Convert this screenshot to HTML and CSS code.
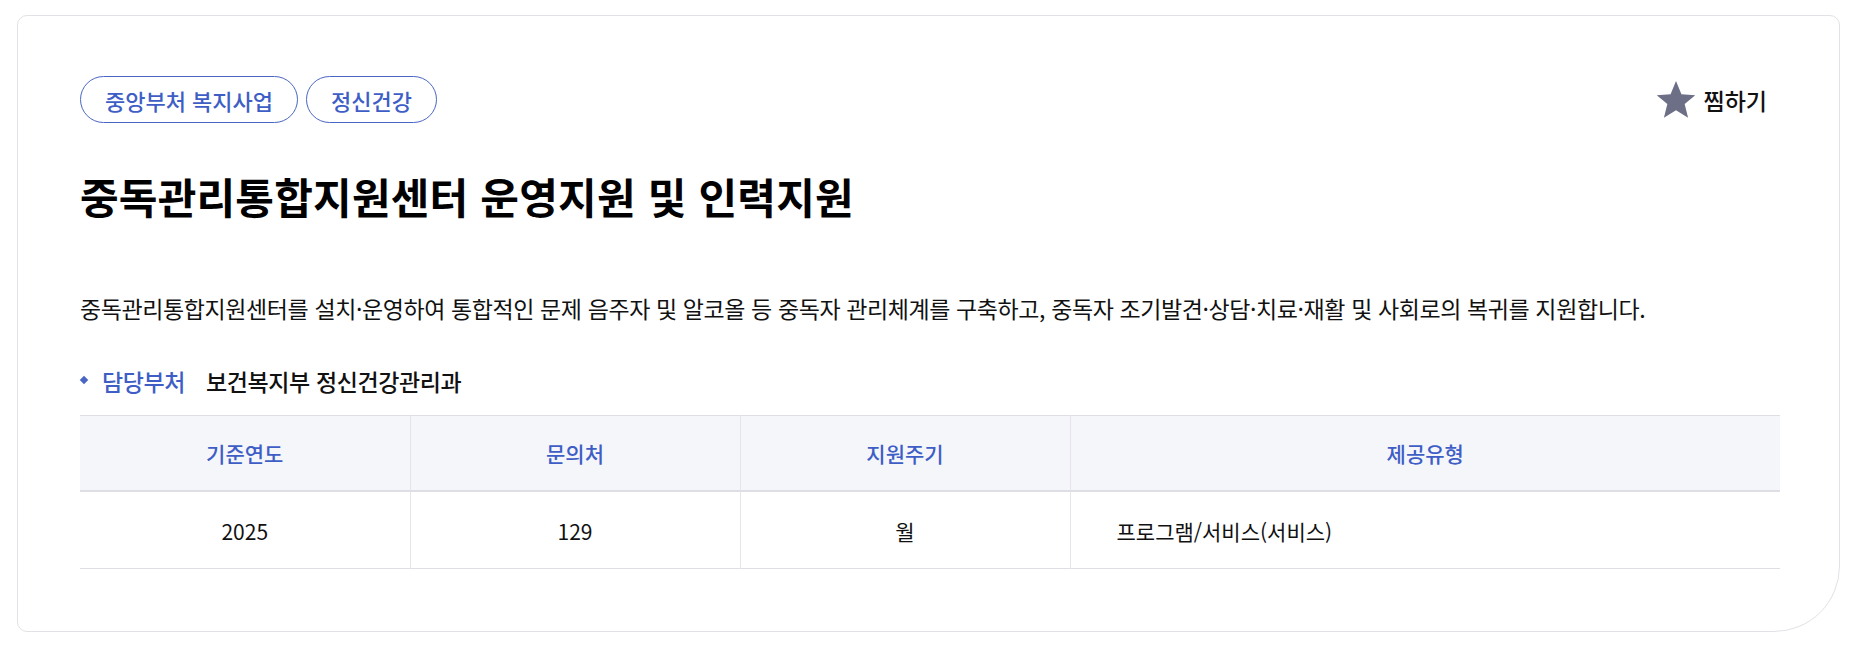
FILE: index.html
```html
<!DOCTYPE html>
<html lang="ko">
<head>
<meta charset="utf-8">
<title>중독관리통합지원센터 운영지원 및 인력지원</title>
<link rel="stylesheet" href="styles.css">
</head>
<body>
<div class="page">
  <section class="card">
    <div class="top-row">
      <div class="tags">
        <span class="tag">중앙부처 복지사업</span>
        <span class="tag">정신건강</span>
      </div>
      <button class="wish" type="button">
        <svg class="star" width="42" height="42" viewBox="0 0 24 24" aria-hidden="true">
          <path d="M12 1.2l3.1 7.45 7.9.6-6.05 5.1 1.95 7.75L12 17.9 5.1 22.1l1.95-7.75L1 9.25l7.9-.6z" fill="#6d6f86"/>
        </svg>
        <span>찜하기</span>
      </button>
    </div>
    <h1 class="title">중독관리통합지원센터 운영지원 및 인력지원</h1>
    <p class="desc">중독관리통합지원센터를 설치·운영하여 통합적인 문제 음주자 및 알코올 등 중독자 관리체계를 구축하고, 중독자 조기발견·상담·치료·재활 및 사회로의 복귀를 지원합니다.</p>
    <div class="dept">
      <span class="dept-label">담당부처</span>
      <span class="dept-value">보건복지부 정신건강관리과</span>
    </div>
    <table class="info">
      <thead>
        <tr>
          <th class="c1">기준연도</th>
          <th class="c2">문의처</th>
          <th class="c3">지원주기</th>
          <th class="c4">제공유형</th>
        </tr>
      </thead>
      <tbody>
        <tr>
          <td>2025</td>
          <td>129</td>
          <td>월</td>
          <td class="left">프로그램/서비스(서비스)</td>
        </tr>
      </tbody>
    </table>
  </section>
</div>
</body>
</html>
```

FILE: styles.css
```css
* { box-sizing: border-box; }

html, body {
  margin: 0;
  background: #ffffff;
}

body {
  font-family: "Noto Sans CJK KR", "Noto Sans", "Liberation Sans", sans-serif;
  color: #111111;
}

.page {
  padding: 15px 17px 17px 17px;
}

.card {
  border: 1px solid #e2e2e6;
  border-radius: 10px 10px 66px 10px;
  padding: 60px 59px 62px 62px;
  background: #fff;
}

.top-row {
  display: flex;
  justify-content: space-between;
  align-items: center;
}

.tags {
  display: flex;
  gap: 8px;
}

.tag {
  display: inline-flex;
  align-items: center;
  height: 47px;
  padding: 0 24px;
  border: 1px solid #4a66c4;
  border-radius: 24px;
  color: #3e5ec6;
  font-size: 22px;
  font-weight: 500;
}

.wish {
  display: flex;
  align-items: center;
  gap: 7px;
  margin-right: 13px;
  border: 0;
  background: none;
  padding: 0;
  font-family: inherit;
  font-size: 23px;
  font-weight: 500;
  color: #111;
  cursor: pointer;
}

.star { display: block; }

.title {
  margin: 46px 0 0 0;
  font-size: 42px;
  line-height: 54px;
  font-weight: 700;
  letter-spacing: 0.2px;
  color: #000;
}

.desc {
  margin: 69px 0 0 0;
  font-size: 23px;
  line-height: 32px;
  color: #111;
  letter-spacing: -0.4px;
}

.dept {
  margin-top: 42px;
  display: flex;
  align-items: center;
  font-size: 23px;
  line-height: 30px;
  font-weight: 500;
  letter-spacing: -0.4px;
}

.dept-label {
  position: relative;
  display: inline-flex;
  align-items: center;
  color: #3e5ec6;
  padding-left: 22px;
  margin-right: 21px;
}

.dept-label::before {
  content: "";
  position: absolute;
  left: 1px;
  top: 50%;
  width: 6px;
  height: 6px;
  margin-top: -4px;
  background: #4a66c4;
  transform: rotate(45deg);
}

.dept-value { color: #111; }

.info {
  width: 100%;
  margin-top: 19px;
  border-collapse: collapse;
  table-layout: fixed;
  font-size: 21px;
}

.info th, .info td {
  text-align: center;
  font-weight: 400;
}

.info .c1, .info .c2, .info .c3 { width: 330px; }

.info thead tr {
  background: #f5f6fa;
  border-top: 1px solid #dedee5;
  border-bottom: 2px solid #dedee5;
}

.info th {
  height: 75px;
  color: #3e5ec6;
  font-weight: 500;
}

.info th + th {
  border-left: 1px solid #e4e4ea;
}

.info tbody tr {
  border-bottom: 1px solid #dedee5;
}

.info td {
  height: 78px;
  color: #111;
  padding-top: 4px;
}

.info td + td {
  border-left: 1px solid #e6e6ea;
}

.info td.left {
  text-align: left;
  padding-left: 46px;
}
```
